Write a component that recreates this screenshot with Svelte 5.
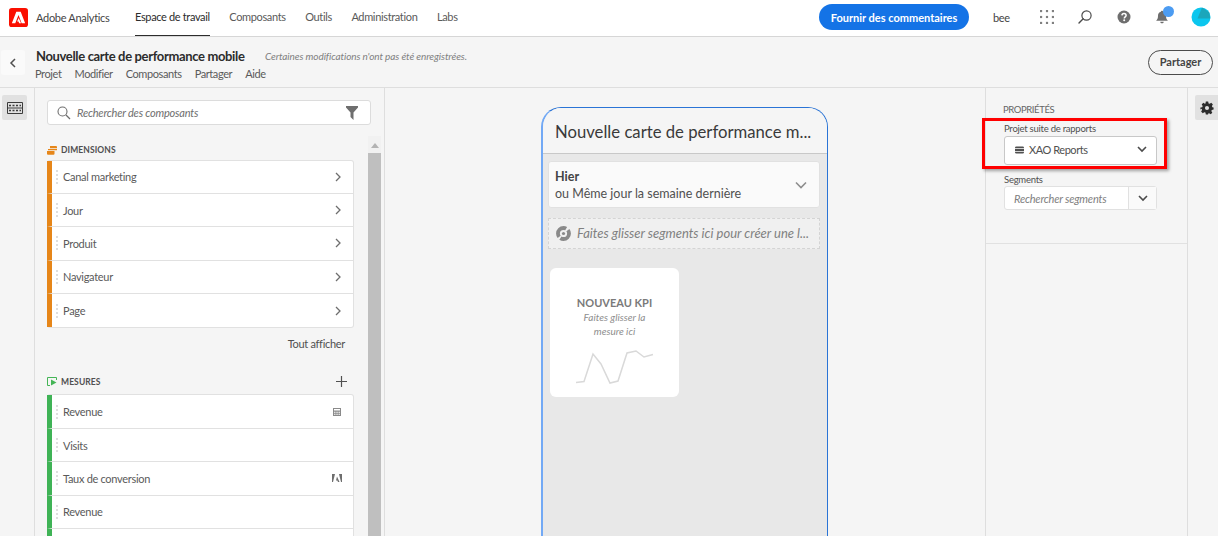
<script>
  const nav = ['Espace de travail', 'Composants', 'Outils', 'Administration', 'Labs'];
  const menu = ['Projet', 'Modifier', 'Composants', 'Partager', 'Aide'];
  const dimensions = ['Canal marketing', 'Jour', 'Produit', 'Navigateur', 'Page'];
  const metrics = [
    { name: 'Revenue', icon: 'calc' },
    { name: 'Visits' },
    { name: 'Taux de conversion', icon: 'adobe' },
    { name: 'Revenue' }
  ];
</script>

<div class="page">
  <header class="top">
    <svg class="logo" viewBox="0 0 20 20" aria-hidden="true">
      <rect width="20" height="20" rx="3" fill="#fa0f00" />
      <path d="M7.700 4h4.600L17 16h-3.700L10 7.400 6.600 16H3zM10.200 10.500l2.500 5.500h-2l-.7-1.900H8.500z" fill="#fff" />
    </svg>
    <span class="brand">Adobe Analytics</span>
    <nav class="nav">
      {#each nav as item, i}
        <span class="nav-item" class:active={i === 0}>{item}</span>
      {/each}
    </nav>
    <button class="feedback">Fournir des commentaires</button>
    <span class="org">bee</span>
    <svg class="ico grid" viewBox="0 0 13 13" aria-hidden="true">
      {#each [1, 6.5, 12] as y}
        {#each [1, 6.5, 12] as x}
          <rect x={x - 1} y={y - 1} width="2" height="2" fill="#808080" />
        {/each}
      {/each}
    </svg>
    <svg class="ico find" viewBox="0 0 14 14" aria-hidden="true">
      <circle cx="8.500" cy="5.500" r="4.600" fill="none" stroke="#4b4b4b" stroke-width="1.200" />
      <path d="M5.200 8.800 1 13" stroke="#4b4b4b" stroke-width="1.400" stroke-linecap="round" />
    </svg>
    <svg class="ico help" viewBox="0 0 14 14" aria-hidden="true">
      <circle cx="7" cy="7" r="6.500" fill="#6e6e6e" />
      <path d="M4.900 5.400C5 4.200 5.900 3.500 7 3.500c1.200 0 2.100.8 2.100 1.900 0 1.500-1.800 1.500-1.800 3" fill="none" stroke="#fff" stroke-width="1.500" />
      <circle cx="7.200" cy="10.300" r="1" fill="#fff" />
    </svg>
    <span class="bell-wrap">
      <svg class="ico bell" viewBox="0 0 14 14" aria-hidden="true">
        <path d="M7 .8c.7 0 1 .4 1.100 1 2 .5 2.900 2 2.900 4 0 2.500.6 3.600 1.900 5H1.100c1.300-1.400 1.900-2.500 1.900-5 0-2 .9-3.500 2.900-4 .1-.6.4-1 1.100-1zM5.300 11.700h3.400c0 1-.7 1.600-1.700 1.600s-1.700-.6-1.700-1.600z" fill="#6e6e6e" />
      </svg>
      <span class="dot"></span>
    </span>
    <svg class="avatar" viewBox="0 0 20 20" aria-hidden="true">
      <circle cx="10" cy="10" r="9.500" fill="#0bc6ee" />
      <path d="M11 .6 18.200 5.200 19.300 11.500H6.500z" fill="#1ba6bb" />
    </svg>
  </header>

  <section class="sub">
    <button class="back" aria-label="Retour">
      <svg viewBox="0 0 8 12" aria-hidden="true"><path d="M6 2 2 6l4 4" fill="none" stroke="#505050" stroke-width="1.500" /></svg>
    </button>
    <div class="sub-main">
      <div class="title-row">
        <h1>Nouvelle carte de performance mobile</h1>
        <em>Certaines modifications n'ont pas été enregistrées.</em>
      </div>
      <div class="menu">
        {#each menu as item}<span>{item}</span>{/each}
      </div>
    </div>
    <button class="share">Partager</button>
  </section>

  <main class="work">
    <aside class="rail">
      <div class="rail-btn">
        <svg viewBox="0 0 16 14" aria-hidden="true">
          <path d="M.5 1.500h15v11H.5z" fill="none" stroke="#3c3c3c" />
          <path d="M0 7h16" stroke="#3c3c3c" />
          <path d="M2 4.500h12M2 9.500h12" stroke="#3c3c3c" stroke-width="1.600" stroke-dasharray="2 1.500" />
        </svg>
      </div>
    </aside>

    <section class="panel">
      <div class="panel-scroll">
        <div class="search">
          <svg class="lens" viewBox="0 0 14 14" aria-hidden="true">
            <circle cx="5.500" cy="5.500" r="4.500" fill="none" stroke="#6e6e6e" stroke-width="1.100" />
            <path d="M9 9l4 4" stroke="#6e6e6e" stroke-width="1.300" />
          </svg>
          <span>Rechercher des composants</span>
          <svg class="funnel" viewBox="0 0 12 14" aria-hidden="true"><path d="M0 0h12v1.500L7.500 6.500V14L4.500 11V6.500L0 1.500z" fill="#6e6e6e" /></svg>
        </div>

        <div class="group-head">
          <svg viewBox="0 0 10 9" aria-hidden="true">
            <path d="M3 0h6a1 1 0 0 1 1 1v1.300H3zM1 3h9v1.300H1zM0 5h7.500v2.800a1 1 0 0 1-1 1H1a1 1 0 0 1-1-1z" fill="#e68619" />
          </svg>
          <span>DIMENSIONS</span>
        </div>
        <ul class="list dim">
          {#each dimensions as name}
            <li>
              <span class="grip"></span>
              <span class="name">{name}</span>
              <svg class="chev" viewBox="0 0 6 10" aria-hidden="true"><path d="M1 1l4 4-4 4" fill="none" stroke="#6e6e6e" stroke-width="1.300" /></svg>
            </li>
          {/each}
        </ul>
        <div class="all">Tout afficher</div>

        <div class="group-head metrics-head">
          <svg viewBox="0 0 10 9" aria-hidden="true">
            <path d="M9.500 3V.5H.5v8H3" fill="none" stroke="#44b556" />
            <path d="M4 2.500 9.500 5.500 4 8.500z" fill="#44b556" />
          </svg>
          <span>MESURES</span>
          <svg class="plus" viewBox="0 0 11 11" aria-hidden="true"><path d="M5.500 0v11M0 5.500h11" stroke="#505050" stroke-width="1.200" /></svg>
        </div>
        <ul class="list met">
          {#each metrics as m}
            <li>
              <span class="grip"></span>
              <span class="name">{m.name}</span>
              {#if m.icon === 'calc'}
                <svg class="meta" viewBox="0 0 8 8" aria-hidden="true">
                  <rect width="8" height="8" fill="#8a8a8a" />
                  <rect x="1" y="1" width="6" height="1.500" fill="#fff" />
                  <path d="M1 3.800h1.500v1H1zM3.300 3.800h1.500v1H3.300zM5.500 3.800H7v1H5.500zM1 5.800h1.500v1H1zM3.300 5.800h1.500v1H3.300zM5.500 5.800H7v1H5.500z" fill="#fff" />
                </svg>
              {:else if m.icon === 'adobe'}
                <svg class="meta" viewBox="0 0 10 8" aria-hidden="true">
                  <path d="M0 0h3L1 8H0zM10 0H7l2 8h1zM5 2.500 7.500 8H6L5.300 6.500H4z" fill="#6e6e6e" />
                </svg>
              {/if}
            </li>
          {/each}
          <li></li>
        </ul>
      </div>
      <div class="scrollbar">
        <span class="arrow"></span>
        <span class="thumb"></span>
      </div>
    </section>

    <section class="canvas">
      <div class="phone">
        <div class="phone-title">Nouvelle carte de performance m...</div>
        <div class="phone-body">
          <div class="date">
            <div>
              <strong>Hier</strong>
              <span>ou Même jour la semaine dernière</span>
            </div>
            <svg viewBox="0 0 12 8" aria-hidden="true"><path d="M1 1.500l5 5 5-5" fill="none" stroke="#8e8e8e" stroke-width="1.600" /></svg>
          </div>
          <div class="drop">
            <svg viewBox="0 0 16 16" aria-hidden="true">
              <circle cx="8" cy="8" r="5.200" fill="none" stroke="#8a8a8a" stroke-width="3.600" stroke-dasharray="11 1.500 14 2" />
              <circle cx="8" cy="8" r="1.500" fill="#8a8a8a" />
            </svg>
            <em>Faites glisser segments ici pour créer une l...</em>
          </div>
          <div class="kpi">
            <b>NOUVEAU KPI</b>
            <i>Faites glisser la<br />mesure ici</i>
            <svg viewBox="0 0 78 34" aria-hidden="true">
              <path d="M0 32.500 8 31.500 17 4 25 14 34 33 42 31 51 3 60 1 68 7 77 4.500" fill="none" stroke="#d9d9d9" stroke-width="1.500" />
            </svg>
          </div>
        </div>
      </div>
    </section>

    <aside class="props">
      <div class="props-inner">
        <h2>PROPRIÉTÉS</h2>
        <label for="suite">Projet suite de rapports</label>
        <div class="select" id="suite">
          <svg class="db" viewBox="0 0 10 8" aria-hidden="true">
            <path d="M1.500 0h7A1.500 1.500 0 0 1 10 1.500V2H0v-.5A1.500 1.500 0 0 1 1.500 0zM0 3h10v2H0zM0 6h10v.5A1.500 1.500 0 0 1 8.500 8h-7A1.500 1.500 0 0 1 0 6.500z" fill="#505050" />
          </svg>
          <span>XAO Reports</span>
          <svg class="down" viewBox="0 0 10 7" aria-hidden="true"><path d="M1 1l4 4 4-4" fill="none" stroke="#4b4b4b" stroke-width="1.600" /></svg>
        </div>
        <label class="seg-label" for="seg">Segments</label>
        <div class="combo" id="seg">
          <em>Rechercher segments</em>
          <span class="combo-btn">
            <svg class="down" viewBox="0 0 10 7" aria-hidden="true"><path d="M1 1l4 4 4-4" fill="none" stroke="#4b4b4b" stroke-width="1.600" /></svg>
          </span>
        </div>
      </div>
      <span class="callout"></span>
    </aside>

    <aside class="rail-right">
      <div class="gear">
        <svg viewBox="0 0 24 24" aria-hidden="true">
          <path fill="#2c2c2c" fill-rule="evenodd" d="M10 1h4l.7 3.100 1.900.8 2.700-1.700 2.800 2.800-1.700 2.700.8 1.900L23.300 11.300v3.400l-3.100.7-.8 1.900 1.700 2.700-2.800 2.800-2.700-1.700-1.900.8L14 23h-4l-.7-3.100-1.900-.8-2.700 1.700-2.800-2.800 1.700-2.700-.8-1.900L.7 14.700v-3.400l3.100-.7.800-1.900L2.900 6 5.700 3.200l2.700 1.700 1-.8zM12 8.500a3.500 3.500 0 1 0 0 7 3.500 3.500 0 0 0 0-7z" />
        </svg>
      </div>
    </aside>
  </main>
</div>

<style>
  :global(body) {
    margin: 0;
    background: #f5f5f5;
    overflow: hidden;
  }
  .page {
    width: 1218px;
    height: 536px;
    overflow: hidden;
    font-family: Lato, "Noto Sans", sans-serif;
    font-size: 11px;
    letter-spacing: -.3px;
    color: #4b4b4b;
    display: flex;
    flex-direction: column;
  }
  em, i { font-style: italic; }

  .top {
    height: 37px;
    flex: none;
    box-sizing: border-box;
    background: #fff;
    border-bottom: 1px solid #d6d6d6;
    display: flex;
    align-items: center;
    padding: 0 0 2px 9px;
  }
  .logo { width: 19px; height: 19px; }
  .brand { margin-left: 8px; color: #444; width: 99px; white-space: nowrap; }
  .nav { display: flex; gap: 19.5px; height: 36px; margin-bottom: -2px; width: 684px; letter-spacing: -.35px; }
  .nav-item {
    height: 100%;
    line-height: 33px;
    color: #5a5a5a;
    box-sizing: border-box;
    white-space: nowrap;
  }
  .nav-item.active {
    color: #2c2c2c;
    border-bottom: 1px solid #2c2c2c;
  }
  .feedback {
    width: 150px;
    height: 26px;
    border: 0;
    border-radius: 13px;
    background: #1473e6;
    color: #fff;
    font: 700 11px Lato, sans-serif;
    padding: 0;
    white-space: nowrap;
  }
  .org { margin-left: 24px; width: 47px; color: #444; }
  .ico { width: 14px; height: 14px; flex: none; }
  .find { margin-left: 24px; }
  .help { margin-left: 25px; }
  .bell-wrap { margin-left: 24px; position: relative; display: flex; }
  .dot {
    position: absolute;
    left: 8px;
    top: -4px;
    width: 11px;
    height: 11px;
    border-radius: 50%;
    background: #4c9cf2;
  }
  .avatar { width: 20px; height: 20px; margin-left: 22px; }

  .sub {
    height: 51px;
    flex: none;
    border-bottom: 1px solid #dedede;
    box-sizing: border-box;
    display: flex;
    align-items: flex-start;
    padding-left: 1px;
  }
  .back {
    width: 24px;
    height: 25px;
    margin-top: 13px;
    border: 0;
    border-radius: 3px;
    background: #fafafa;
    padding: 0;
    display: flex;
    align-items: center;
    justify-content: center;
  }
  .back svg { width: 8px; height: 12px; }
  .sub-main { margin-left: 11px; flex: 1; padding-top: 10px; }
  .title-row { display: flex; align-items: center; height: 18px; }
  h1 {
    margin: 0;
    font-size: 13px;
    font-weight: 700;
    letter-spacing: -.35px;
    color: #2c2c2c;
    width: 229px;
    white-space: nowrap;
  }
  .title-row em { font-size: 10px; letter-spacing: -.1px; color: #808080; white-space: nowrap; }
  .menu {
    display: flex;
    gap: 13px;
    margin-top: 0;
    margin-left: -1px;
    height: 18px;
    line-height: 18px;
    letter-spacing: -.4px;
    color: #5a5a5a;
  }
  .share {
    width: 65px;
    height: 25px;
    margin: 13px 5px 0 0;
    border: 1px solid #4b4b4b;
    border-radius: 13px;
    background: transparent;
    font: 700 11px Lato, sans-serif;
    color: #444;
    padding: 0 0 2px;
  }

  .work { flex: 1; min-height: 0; display: flex; }
  .rail { width: 35px; flex: none; border-right: 1px solid #dedede; box-sizing: border-box; padding: 7px 0 0 2px; }
  .rail-btn {
    width: 25px;
    height: 25px;
    background: #e1e1e1;
    border-radius: 2px;
    display: flex;
    align-items: center;
    justify-content: center;
  }
  .rail-btn svg { width: 16px; height: 14px; }

  .panel {
    width: 350px;
    flex: none;
    display: flex;
    border-right: 1px solid #dedede;
    box-sizing: border-box;
  }
  .panel-scroll { width: 333px; padding: 12px 0 0 12px; box-sizing: border-box; }
  .search {
    width: 324px;
    height: 25px;
    box-sizing: border-box;
    background: #fff;
    border: 1px solid #dcdcdc;
    border-radius: 3px;
    display: flex;
    align-items: center;
    padding: 0 12px 0 9px;
    font-style: italic;
    font-size: 11px;
    letter-spacing: -.2px;
    color: #6e6e6e;
  }
  .lens { width: 14px; height: 14px; margin-right: 6px; }
  .funnel { width: 12px; height: 14px; margin-left: auto; }
  .group-head {
    display: flex;
    align-items: center;
    height: 18px;
    margin-top: 16px;
    width: 307px;
    font-size: 8.5px;
    font-weight: 700;
    letter-spacing: .1px;
    color: #505050;
  }
  .group-head > svg:first-child { width: 10px; height: 9px; margin-right: 4px; }
  .plus { width: 11px; height: 11px; margin-left: auto; margin-right: 7px; }
  .list {
    list-style: none;
    margin: .5px 0 0;
    padding: 0;
    width: 307px;
    background: #fff;
    border: 1px solid #e1e1e1;
    border-left: 0;
    border-radius: 3px;
    box-sizing: border-box;
  }
  .list li {
    height: 33.4px;
    box-sizing: border-box;
    display: flex;
    align-items: center;
    border-left: 5px solid;
    border-bottom: 1px solid #e1e1e1;
    padding-right: 11px;
  }
  .list li:last-child { border-bottom: 0; }
  .dim li { border-left-color: #e68619; }
  .met { margin-top: 3.5px; }
  .met li { border-left-color: #3fb356; }
  .grip {
    width: 0;
    height: 14px;
    margin-left: 4px;
    border-left: 2px dotted #dedede;
  }
  .name { margin-left: 5px; color: #5a5a5a; }
  .chev { width: 6px; height: 10px; margin-left: auto; margin-right: 1px; }
  .meta { width: 10px; height: 8px; margin-left: auto; }
  .all { width: 298px; text-align: right; margin-top: 8px; height: 15px; line-height: 15px; color: #505050; }
  .metrics-head { margin-top: 21.5px; }

  .scrollbar { width: 13px; margin-top: 48px; display: flex; flex-direction: column; align-items: center; background: #f1f1f1; }
  .arrow {
    width: 0;
    height: 0;
    margin-top: 7px;
    border: 4px solid transparent;
    border-top: 0;
    border-bottom: 5px solid #b3b3b3;
  }
  .thumb { flex: 1; width: 13px; margin-top: 5px; background: #bfbfbf; }

  .canvas {
    width: 601px;
    flex: none;
    box-sizing: border-box;
    border-right: 1px solid #dedede;
    padding: 19px 0 0 156px;
    letter-spacing: 0;
  }
  .phone {
    width: 287px;
    height: 480px;
    box-sizing: border-box;
    border: 1px solid #2a74d6;
    border-left: 2px solid #72a9f5;
    border-radius: 20px 20px 0 0;
    overflow: hidden;
    background: #e8e8e8;
  }
  .phone-title {
    height: 46px;
    box-sizing: border-box;
    background: #f5f5f5;
    border-bottom: 1px solid #c8c8c8;
    font-size: 16.7px;
    line-height: 48px;
    padding-left: 12px;
    color: #3a3a3a;
    white-space: nowrap;
  }
  .phone-body { padding: 6.5px 7px 0 5px; }
  .date {
    height: 47px;
    box-sizing: border-box;
    background: #fafafa;
    border: 1px solid #e1e1e1;
    border-radius: 3px;
    display: flex;
    align-items: center;
    justify-content: space-between;
    padding: 2px 12px 0 6px;
    font-size: 12.5px;
    line-height: 17px;
    color: #505050;
  }
  .date strong, .date span { display: block; white-space: nowrap; }
  .date strong { color: #444; }
  .date svg { width: 12px; height: 8px; }
  .drop {
    margin-top: 10px;
    height: 31px;
    box-sizing: border-box;
    background: #f0f0f0;
    border: 1px dashed #d4d4d4;
    display: flex;
    align-items: center;
    padding-left: 6px;
    font-size: 13px;
    color: #808080;
    white-space: nowrap;
  }
  .drop svg { width: 17px; height: 17px; margin-right: 5px; flex: none; }
  .kpi {
    width: 129px;
    height: 129px;
    margin: 19px 0 0 2px;
    box-sizing: border-box;
    background: #fff;
    border-radius: 6px;
    display: flex;
    flex-direction: column;
    align-items: center;
    padding-top: 27px;
    text-align: center;
  }
  .kpi b { font-size: 11px; line-height: 15px; color: #7a7a7a; }
  .kpi i { font-size: 10px; line-height: 14px; color: #8e8e8e; }
  .kpi svg { width: 78px; height: 34px; margin-top: 12px; }

  .props {
    width: 202px;
    flex: none;
    border-right: 1px solid #dedede;
    box-sizing: border-box;
    position: relative;
  }
  .props-inner {
    height: 156px;
    box-sizing: border-box;
    border-bottom: 1px solid #e1e1e1;
    padding: 15px 0 0 18px;
  }
  h2 { margin: 0 0 0 -1px; font-size: 9.5px; font-weight: 400; letter-spacing: -.4px; line-height: 14px; color: #666; }
  label { display: block; font-size: 9.5px; letter-spacing: -.25px; line-height: 12px; color: #505050; }
  h2 + label { margin-top: 6px; }
  .select {
    width: 153px;
    height: 29px;
    margin-top: 1px;
    box-sizing: border-box;
    background: #fff;
    border: 1px solid #c8c8c8;
    border-radius: 3px;
    display: flex;
    align-items: center;
    padding: 0 9px 2px 10px;
    font-size: 11px;
    letter-spacing: -.45px;
    color: #505050;
  }
  .db { width: 9px; height: 8px; margin-right: 5px; }
  .down { width: 10px; height: 7px; margin-left: auto; }
  .seg-label { margin-top: 9px; }
  .combo {
    width: 153px;
    height: 24px;
    box-sizing: border-box;
    background: #fff;
    border: 1px solid #e1e1e1;
    border-radius: 3px;
    display: flex;
    align-items: center;
    padding-left: 9px;
    font-size: 11px;
    letter-spacing: -.2px;
    color: #808080;
  }
  .combo-btn {
    margin-left: auto;
    width: 28px;
    height: 100%;
    box-sizing: border-box;
    background: #fafafa;
    border-left: 1px solid #e1e1e1;
    display: flex;
    align-items: center;
    justify-content: center;
  }
  .combo-btn .down { margin: 0; }
  .callout {
    position: absolute;
    left: -4px;
    top: 30px;
    width: 185px;
    height: 51px;
    box-sizing: border-box;
    border: 3px solid #f00;
    box-shadow: 2px 2px 3px rgb(0 0 0 / 0.35);
  }

  .rail-right { flex: 1; padding: 7px 0 0 7px; }
  .gear {
    width: 23px;
    height: 25px;
    background: #e1e1e1;
    border-radius: 2px 0 0 2px;
    display: flex;
    align-items: center;
    justify-content: center;
  }
  .gear svg { width: 14px; height: 14px; }
</style>
